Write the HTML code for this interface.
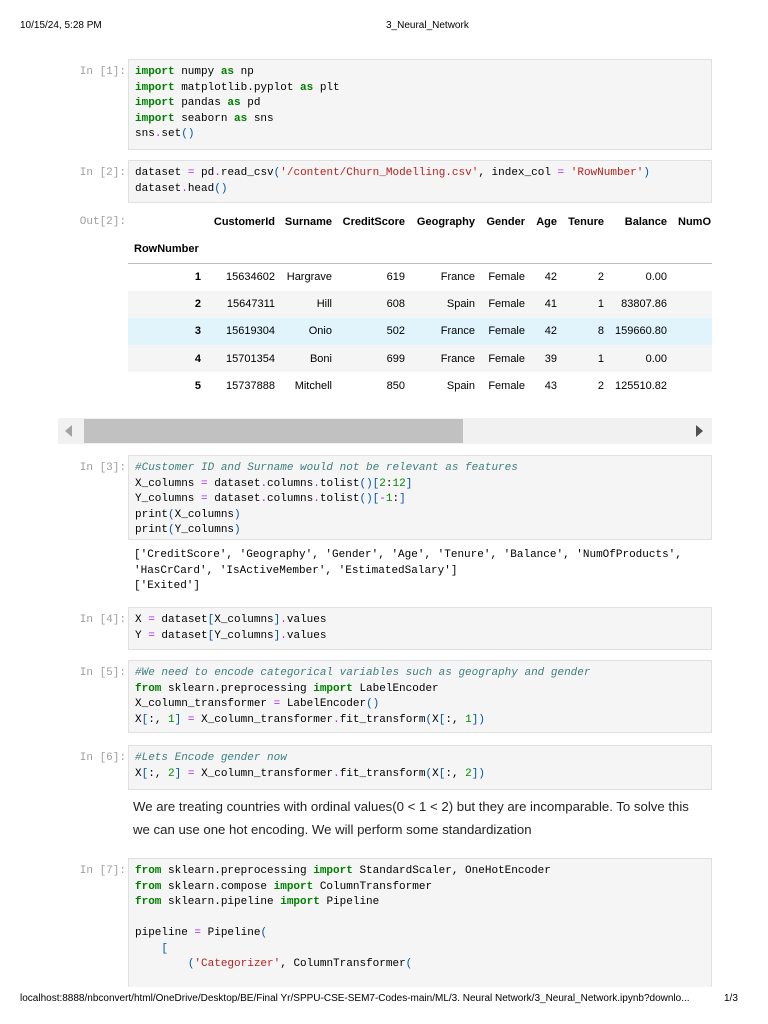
<!DOCTYPE html>
<html><head><meta charset="utf-8"><style>
*{margin:0;padding:0;box-sizing:border-box}
body{width:768px;height:1024px;background:#fff;position:relative;overflow:hidden;font-family:"Liberation Sans",sans-serif;color:#000}
.hdr{position:absolute;font-size:10px;top:20px}
.box{position:absolute;left:128px;width:584px;background:#f5f5f5;border:1px solid #e0e0e0}
pre{font-family:"Liberation Mono",monospace;font-size:11px;line-height:15.5px;padding:5px 0 0 6px;color:#000;white-space:pre}
.p{position:absolute;left:40px;width:86px;text-align:right;font-family:"Liberation Mono",monospace;font-size:11px;color:#9e9e9e}
.k{color:#008000;font-weight:bold}.s{color:#ba2121}.c{color:#408080;font-style:italic}.o{color:#aa22ff}.b{color:#0055aa}.n{color:#008800}
.out{position:absolute;left:128px}
.t{position:absolute;font-size:11px;white-space:nowrap}
.r{position:absolute;left:128px;width:584px;height:27px}
.md{position:absolute;left:133px;font-size:13.2px;color:#222}
</style></head><body>
<div class="hdr" style="left:20px">10/15/24, 5:28 PM</div>
<div class="hdr" style="left:386px">3_Neural_Network</div>

<div class="p" style="top:66px">In [1]:</div>
<div class="box" style="top:59px;height:91px"><pre><span class="k">import</span> numpy <span class="k">as</span> np
<span class="k">import</span> matplotlib.pyplot <span class="k">as</span> plt
<span class="k">import</span> pandas <span class="k">as</span> pd
<span class="k">import</span> seaborn <span class="k">as</span> sns
sns<span class="o">.</span>set<span class="b">()</span></pre></div>

<div class="p" style="top:167px">In [2]:</div>
<div class="box" style="top:160px;height:43px"><pre>dataset <span class="o">=</span> pd<span class="o">.</span>read_csv<span class="b">(</span><span class="s">'/content/Churn_Modelling.csv'</span>, index_col <span class="o">=</span> <span class="s">'RowNumber'</span><span class="b">)</span>
dataset<span class="o">.</span>head<span class="b">()</span></pre></div>

<div class="p" style="top:216px">Out[2]:</div>
<div class="r" style="top:291px;background:#f5f5f5"></div>
<div class="r" style="top:318px;background:#e1f4fc"></div>
<div class="r" style="top:345px;background:#f5f5f5"></div>
<div style="position:absolute;left:128px;width:584px;top:263px;border-top:1px solid #bbb"></div>
<div id="tbl"></div>
<div class="t" style="left:134px;top:243px;font-weight:bold">RowNumber</div>

<div style="position:absolute;left:58px;top:418px;width:654px;height:26px;background:#f1f1f1"></div>
<div style="position:absolute;left:84px;top:419px;width:379px;height:24px;background:#c1c1c1"></div>
<div style="position:absolute;left:65px;top:425px;width:0;height:0;border-top:6px solid transparent;border-bottom:6px solid transparent;border-right:7px solid #a3a3a3"></div>
<div style="position:absolute;left:696px;top:425px;width:0;height:0;border-top:6px solid transparent;border-bottom:6px solid transparent;border-left:7px solid #505050"></div>

<div class="p" style="top:462px">In [3]:</div>
<div class="box" style="top:455px;height:85px"><pre><span class="c">#Customer ID and Surname would not be relevant as features</span>
X_columns <span class="o">=</span> dataset<span class="o">.</span>columns<span class="o">.</span>tolist<span class="b">()[</span><span class="n">2</span>:<span class="n">12</span><span class="b">]</span>
Y_columns <span class="o">=</span> dataset<span class="o">.</span>columns<span class="o">.</span>tolist<span class="b">()[</span><span class="o">-</span><span class="n">1</span>:<span class="b">]</span>
print<span class="b">(</span>X_columns<span class="b">)</span>
print<span class="b">(</span>Y_columns<span class="b">)</span></pre></div>
<div class="out" style="top:543px"><pre>['CreditScore', 'Geography', 'Gender', 'Age', 'Tenure', 'Balance', 'NumOfProducts',
'HasCrCard', 'IsActiveMember', 'EstimatedSalary']
['Exited']</pre></div>

<div class="p" style="top:614px">In [4]:</div>
<div class="box" style="top:607px;height:43px"><pre>X <span class="o">=</span> dataset<span class="b">[</span>X_columns<span class="b">]</span><span class="o">.</span>values
Y <span class="o">=</span> dataset<span class="b">[</span>Y_columns<span class="b">]</span><span class="o">.</span>values</pre></div>

<div class="p" style="top:667px">In [5]:</div>
<div class="box" style="top:660px;height:73px"><pre><span class="c">#We need to encode categorical variables such as geography and gender</span>
<span class="k">from</span> sklearn.preprocessing <span class="k">import</span> LabelEncoder
X_column_transformer <span class="o">=</span> LabelEncoder<span class="b">()</span>
X<span class="b">[</span>:, <span class="n">1</span><span class="b">]</span> <span class="o">=</span> X_column_transformer<span class="o">.</span>fit_transform<span class="b">(</span>X<span class="b">[</span>:, <span class="n">1</span><span class="b">])</span></pre></div>

<div class="p" style="top:752px">In [6]:</div>
<div class="box" style="top:745px;height:45px"><pre><span class="c">#Lets Encode gender now</span>
X<span class="b">[</span>:, <span class="n">2</span><span class="b">]</span> <span class="o">=</span> X_column_transformer<span class="o">.</span>fit_transform<span class="b">(</span>X<span class="b">[</span>:, <span class="n">2</span><span class="b">])</span></pre></div>

<div class="md" style="top:799px">We are treating countries with ordinal values(0 &lt; 1 &lt; 2) but they are incomparable. To solve this</div>
<div class="md" style="top:822px">we can use one hot encoding. We will perform some standardization</div>

<div class="p" style="top:865px">In [7]:</div>
<div class="box" style="top:858px;height:129px;border-bottom:none"><pre><span class="k">from</span> sklearn.preprocessing <span class="k">import</span> StandardScaler, OneHotEncoder
<span class="k">from</span> sklearn.compose <span class="k">import</span> ColumnTransformer
<span class="k">from</span> sklearn.pipeline <span class="k">import</span> Pipeline

pipeline <span class="o">=</span> Pipeline<span class="b">(</span>
    <span class="b">[</span>
        <span class="b">(</span><span class="s">'Categorizer'</span>, ColumnTransformer<span class="b">(</span></pre></div>

<div class="hdr" style="left:20px;top:993px">localhost:8888/nbconvert/html/OneDrive/Desktop/BE/Final Yr/SPPU-CSE-SEM7-Codes-main/ML/3. Neural Network/3_Neural_Network.ipynb?downlo...</div>
<div class="hdr" style="left:724px;top:993px">1/3</div>

<script>
var cols=[275,332,405,475,525,557,604,667];
var hd=["CustomerId","Surname","CreditScore","Geography","Gender","Age","Tenure","Balance"];
var rows=[["1","15634602","Hargrave","619","France","Female","42","2","0.00"],
["2","15647311","Hill","608","Spain","Female","41","1","83807.86"],
["3","15619304","Onio","502","France","Female","42","8","159660.80"],
["4","15701354","Boni","699","France","Female","39","1","0.00"],
["5","15737888","Mitchell","850","Spain","Female","43","2","125510.82"]];
var h="";
function cell(txt,right,top,bold){h+='<div class="t" style="right:'+(768-right)+'px;top:'+top+'px;'+(bold?'font-weight:bold':'')+'">'+txt+'</div>';}
hd.forEach(function(x,i){cell(x,cols[i],216,1)});
h+='<div class="t" style="left:678px;top:216px;font-weight:bold">NumO</div>';
rows.forEach(function(r,j){var top=271+j*27.2;cell(r[0],201,top,1);for(var i=1;i<r.length;i++)cell(r[i],cols[i-1],top,0);});
document.getElementById("tbl").innerHTML=h;
</script>
</body></html>
